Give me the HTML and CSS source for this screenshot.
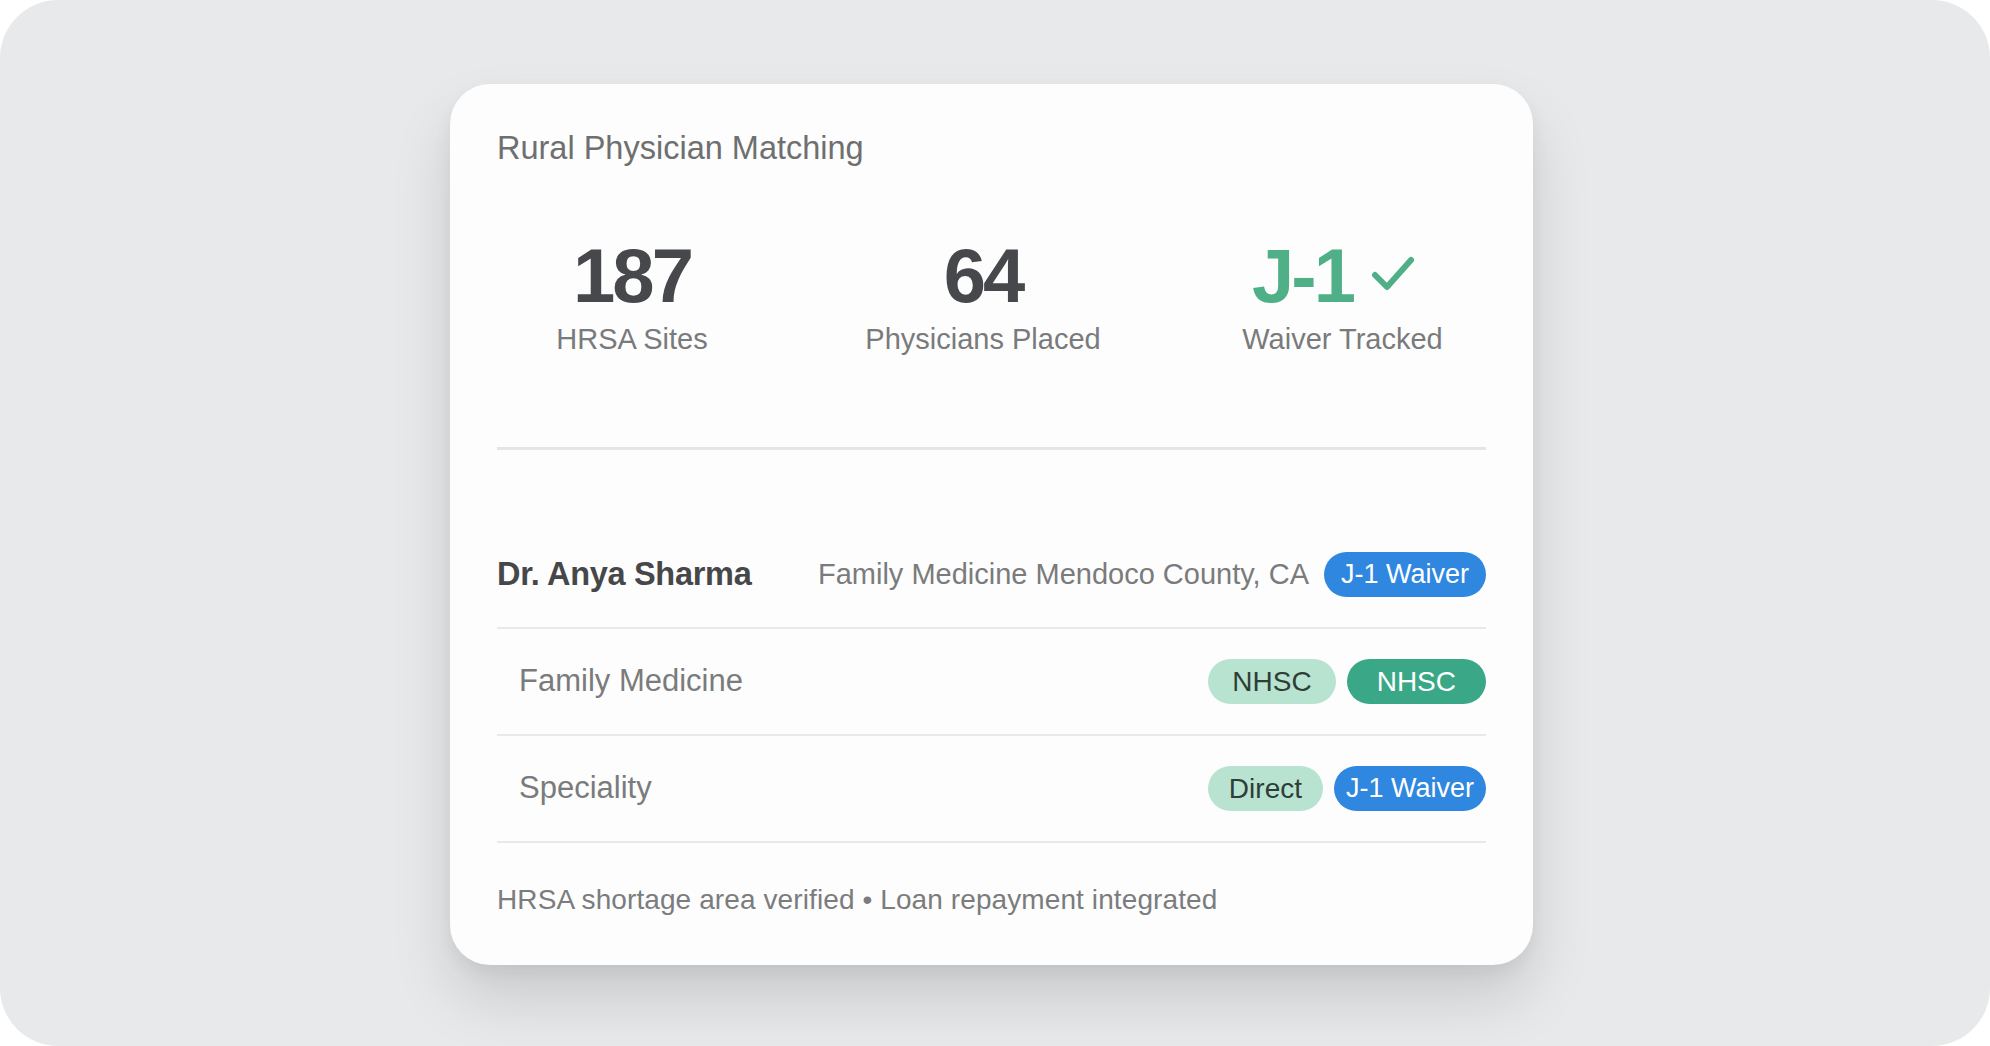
FILE: index.html
```html
<!DOCTYPE html>
<html lang="en">
<head>
    <meta charset="UTF-8">
    <meta name="viewport" content="width=device-width, initial-scale=1.0">
    <title>Rural Physician Matching</title>
    <link rel="stylesheet" href="styles.css">
</head>
<body>
    <div class="frame">
        <div class="card">
            <h1 class="title">Rural Physician Matching</h1>

            <div class="stats">
                <div class="stat">
                    <div class="stat-value">187</div>
                    <div class="stat-label">HRSA Sites</div>
                </div>
                <div class="stat">
                    <div class="stat-value">64</div>
                    <div class="stat-label">Physicians Placed</div>
                </div>
                <div class="stat">
                    <div class="stat-value green">
                        J-1
                        <svg class="check" viewBox="0 0 44 38" width="44" height="38">
                            <polyline points="4,20 16,32 40,5" fill="none" stroke="#4fb087" stroke-width="6" stroke-linecap="round" stroke-linejoin="round"/>
                        </svg>
                    </div>
                    <div class="stat-label">Waiver Tracked</div>
                </div>
            </div>

            <div class="divider"></div>

            <div class="rows">
                <div class="row first">
                    <span class="name">Dr. Anya Sharma</span>
                    <div class="right">
                        <span class="detail">Family Medicine Mendoco County, CA</span>
                        <span class="badge blue">J-1 Waiver</span>
                    </div>
                </div>
                <div class="row">
                    <span class="label">Family Medicine</span>
                    <div class="right">
                        <span class="badge mint wide">NHSC</span>
                        <span class="badge green wider">NHSC</span>
                    </div>
                </div>
                <div class="row">
                    <span class="label">Speciality</span>
                    <div class="right">
                        <span class="badge mint">Direct</span>
                        <span class="badge blue tight">J-1 Waiver</span>
                    </div>
                </div>
            </div>

            <p class="footer">HRSA shortage area verified &bull; Loan repayment integrated</p>
        </div>
    </div>
</body>
</html>
```

FILE: styles.css
```css
body {
    margin: 0;
    background: #ffffff;
    font-family: "Liberation Sans", Arial, sans-serif;
}
.frame {
    width: 1990px;
    height: 1046px;
    background: #e8e9ea;
    border-radius: 58px;
    display: flex;
    align-items: center;
    justify-content: center;
}
.card {
    width: 1083px;
    box-sizing: border-box;
    padding: 45px 47px 49px 47px;
    margin-left: -7px;
    margin-top: 2px;
    background: #fdfdfd;
    border-radius: 40px;
    box-shadow: 0 34px 60px rgba(0, 0, 0, 0.13), 0 8px 18px rgba(0, 0, 0, 0.05);
}
.title {
    margin: 0;
    font-size: 32.5px;
    line-height: 38px;
    font-weight: normal;
    color: #6e6f70;
}
.stats {
    display: grid;
    grid-template-columns: 270px 432px 1fr;
    margin-top: 69px;
    text-align: center;
}
.stat-value {
    font-size: 76px;
    line-height: 80px;
    font-weight: bold;
    color: #46484b;
    letter-spacing: -3px;
    display: flex;
    align-items: center;
    justify-content: center;
}
.stat-value.green {
    color: #4fb087;
    padding-right: 18px;
}
.check {
    margin-left: 18px;
    margin-top: -4px;
}
.stat-label {
    margin-top: 6px;
    font-size: 29px;
    line-height: 34px;
    color: #797a7b;
}
.divider {
    height: 3px;
    background: #e4e5e6;
    margin-top: 91px;
}
.rows {
    margin-top: 72px;
}
.row {
    height: 105px;
    border-bottom: 2px solid #e8e9ea;
    display: flex;
    align-items: center;
    justify-content: space-between;
}
.name {
    font-size: 32.5px;
    font-weight: bold;
    color: #464749;
    letter-spacing: -0.3px;
}
.label {
    padding-left: 22px;
    font-size: 31px;
    color: #7a7b7c;
}
.right {
    display: flex;
    align-items: center;
    gap: 11px;
}
.detail {
    font-size: 29px;
    color: #7a7b7c;
    margin-right: 4px;
}
.badge {
    height: 45px;
    line-height: 45px;
    border-radius: 23px;
    padding: 0 17px;
    font-size: 27px;
}
.badge.blue {
    background: #2f87df;
    color: #ffffff;
}
.badge.tight {
    padding: 0 12px;
}
.badge.mint {
    background: #b7e3d0;
    color: #2f3d38;
    font-size: 28px;
    padding: 0 21px;
}
.badge.green {
    background: #3aa886;
    color: #ffffff;
    font-size: 28px;
}
.badge.wide {
    padding: 0 24px;
}
.badge.wider {
    padding: 0 30px;
}
.footer {
    margin: 41px 0 0 0;
    font-size: 28px;
    line-height: 32px;
    letter-spacing: 0.1px;
    color: #7b7c7d;
}
```
